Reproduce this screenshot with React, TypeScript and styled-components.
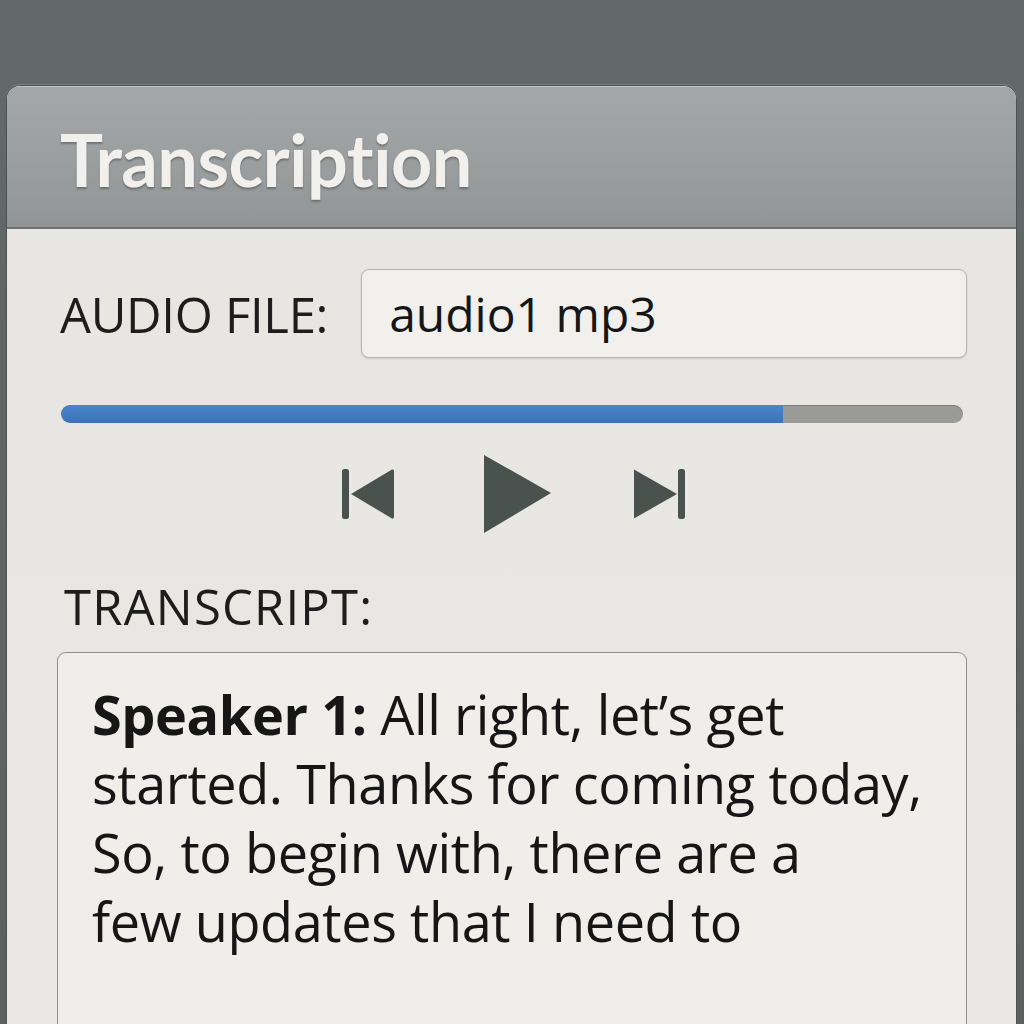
import React from "react";
import styled, { createGlobalStyle } from "styled-components";

const Global = createGlobalStyle`
  html, body { margin: 0; padding: 0; }
  body {
    background: #5e6463;
    font-family: "Open Sans", "Noto Sans", sans-serif;
    overflow: hidden;
  }
`;

const Page = styled.div`
  width: 1024px;
  height: 1024px;
  box-sizing: border-box;
  padding: 85px 6px 0 6px;
  background: linear-gradient(180deg, #636968 0%, #5b6160 100%);
  display: flex;
  overflow: hidden;
`;

const Panel = styled.div`
  flex: 1;
  margin-right: 1px;
  display: flex;
  flex-direction: column;
  border-radius: 14px 14px 0 0;
  border: 1px solid #4d5252;
  border-bottom: none;
  overflow: hidden;
  background: #e8e7e3;
  box-shadow: 0 -1px 0 rgba(255, 255, 255, 0.15);
`;

const Header = styled.div`
  flex-shrink: 0;
  height: 143px;
  box-sizing: border-box;
  padding: 0 0 0 53px;
  display: flex;
  align-items: center;
  background: linear-gradient(180deg, #a4a7a7 0%, #9c9f9f 50%, #919595 100%);
  border-top: 1px solid #c4c6c5;
  border-bottom: 2px solid #6c7070;
`;

const Title = styled.h1`
  margin: 4px 0 0 0;
  font-family: Lato, "Open Sans", sans-serif;
  font-weight: 700;
  font-size: 72px;
  line-height: 1;
  color: #f1f0ec;
  letter-spacing: -0.5px;
  text-shadow: 0 2px 2px rgba(0, 0, 0, 0.28);
`;

const Body = styled.div`
  flex: 1;
  display: flex;
  flex-direction: column;
  padding: 40px 49px 0 50px;
  background: linear-gradient(180deg, #e7e6e2 0%, #e9e8e4 100%);
`;

const FileRow = styled.div`
  flex-shrink: 0;
  display: flex;
  align-items: center;
  gap: 33px;
  padding-left: 3px;
`;

const Label = styled.div<{ $indent?: number; $spacing?: number }>`
  font-family: "Open Sans", sans-serif;
  font-size: 49px;
  font-weight: 400;
  color: #1d1d1d;
  letter-spacing: ${(p) => p.$spacing ?? -0.3}px;
  white-space: nowrap;
  padding-left: ${(p) => p.$indent ?? 0}px;
`;

const FileBox = styled.div`
  flex: 1;
  height: 89px;
  box-sizing: border-box;
  border: 1.5px solid #b5b5b2;
  border-radius: 8px;
  background: #f1f0ed;
  box-shadow: 0 1px 2px rgba(0, 0, 0, 0.12);
  display: flex;
  align-items: center;
  padding-left: 27px;
  font-size: 48px;
  color: #161616;
  letter-spacing: 0px;
`;

const Track = styled.div`
  flex-shrink: 0;
  margin: 47px 4px 0 4px;
  height: 18px;
  border-radius: 9px;
  background: #9a9b99;
  overflow: hidden;
  box-shadow: inset 0 1px 1px rgba(0, 0, 0, 0.2);
`;

const Fill = styled.div`
  height: 100%;
  background: linear-gradient(180deg, #4b84c8 0%, #3b73bb 100%);
  border-radius: 9px 0 0 9px;
`;

const Controls = styled.div`
  flex-shrink: 0;
  display: flex;
  justify-content: center;
  align-items: center;
  margin-top: 32px;
  height: 78px;
  padding-left: 4px;
`;

const CtrlButton = styled.button<{ $gap?: number }>`
  border: none;
  background: none;
  padding: 0;
  margin-left: ${(p) => p.$gap ?? 0}px;
  display: flex;
  align-items: center;
  justify-content: center;
  cursor: pointer;
`;

const Transcript = styled.div`
  flex-shrink: 0;
  margin-top: 40px;
`;

const TextBox = styled.div`
  flex-shrink: 0;
  margin-top: 13px;
  height: 420px;
  box-sizing: border-box;
  border: 1.5px solid #8e8f8d;
  border-bottom: none;
  border-radius: 9px 9px 0 0;
  background: #efeeea;
  padding: 27px 20px 0 34px;
  font-family: "Open Sans", sans-serif;
  font-size: 54px;
  line-height: 69px;
  color: #161616;
  letter-spacing: -0.4px;
`;

const Line = styled.div`
  white-space: nowrap;
`;

const Speaker = styled.strong`
  font-weight: 700;
`;

const iconColor = "#4a5250";

const Prev = () => (
  <svg width="54" height="52" viewBox="0 0 54 52">
    <rect x="1" y="1" width="7" height="50" rx="2.5" fill={iconColor} />
    <path d="M10 26 L51 1.5 Q53 1 53 3 L53 49 Q53 51 51 50.5 Z" fill={iconColor} />
  </svg>
);

const Next = () => (
  <svg width="54" height="52" viewBox="0 0 54 52">
    <path d="M1 1.5 L44 26 L1 50.5 Z" fill={iconColor} />
    <rect x="45" y="1" width="7" height="50" rx="2.5" fill={iconColor} />
  </svg>
);

const Play = () => (
  <svg width="70" height="80" viewBox="0 0 70 80">
    <path d="M1 1 L68 39 L1 79 Z" fill={iconColor} />
  </svg>
);

export default function App() {
  const progress = 80;
  return (
    <>
      <Global />
      <Page>
        <Panel>
          <Header>
            <Title>Transcription</Title>
          </Header>
          <Body>
            <FileRow>
              <Label>AUDIO FILE:</Label>
              <FileBox>audio1 mp3</FileBox>
            </FileRow>
            <Track>
              <Fill style={{ width: `${progress}%` }} />
            </Track>
            <Controls>
              <CtrlButton aria-label="Previous">
                <Prev />
              </CtrlButton>
              <CtrlButton aria-label="Play" $gap={88}>
                <Play />
              </CtrlButton>
              <CtrlButton aria-label="Next" $gap={80}>
                <Next />
              </CtrlButton>
            </Controls>
            <Transcript>
              <Label $indent={7} $spacing={1.2}>TRANSCRIPT:</Label>
            </Transcript>
            <TextBox>
              <Line>
                <Speaker>Speaker 1:</Speaker> All right, let’s get
              </Line>
              <Line>started. Thanks for coming today,</Line>
              <Line>So, to begin with, there are a</Line>
              <Line>few updates that I need to</Line>
            </TextBox>
          </Body>
        </Panel>
      </Page>
    </>
  );
}
